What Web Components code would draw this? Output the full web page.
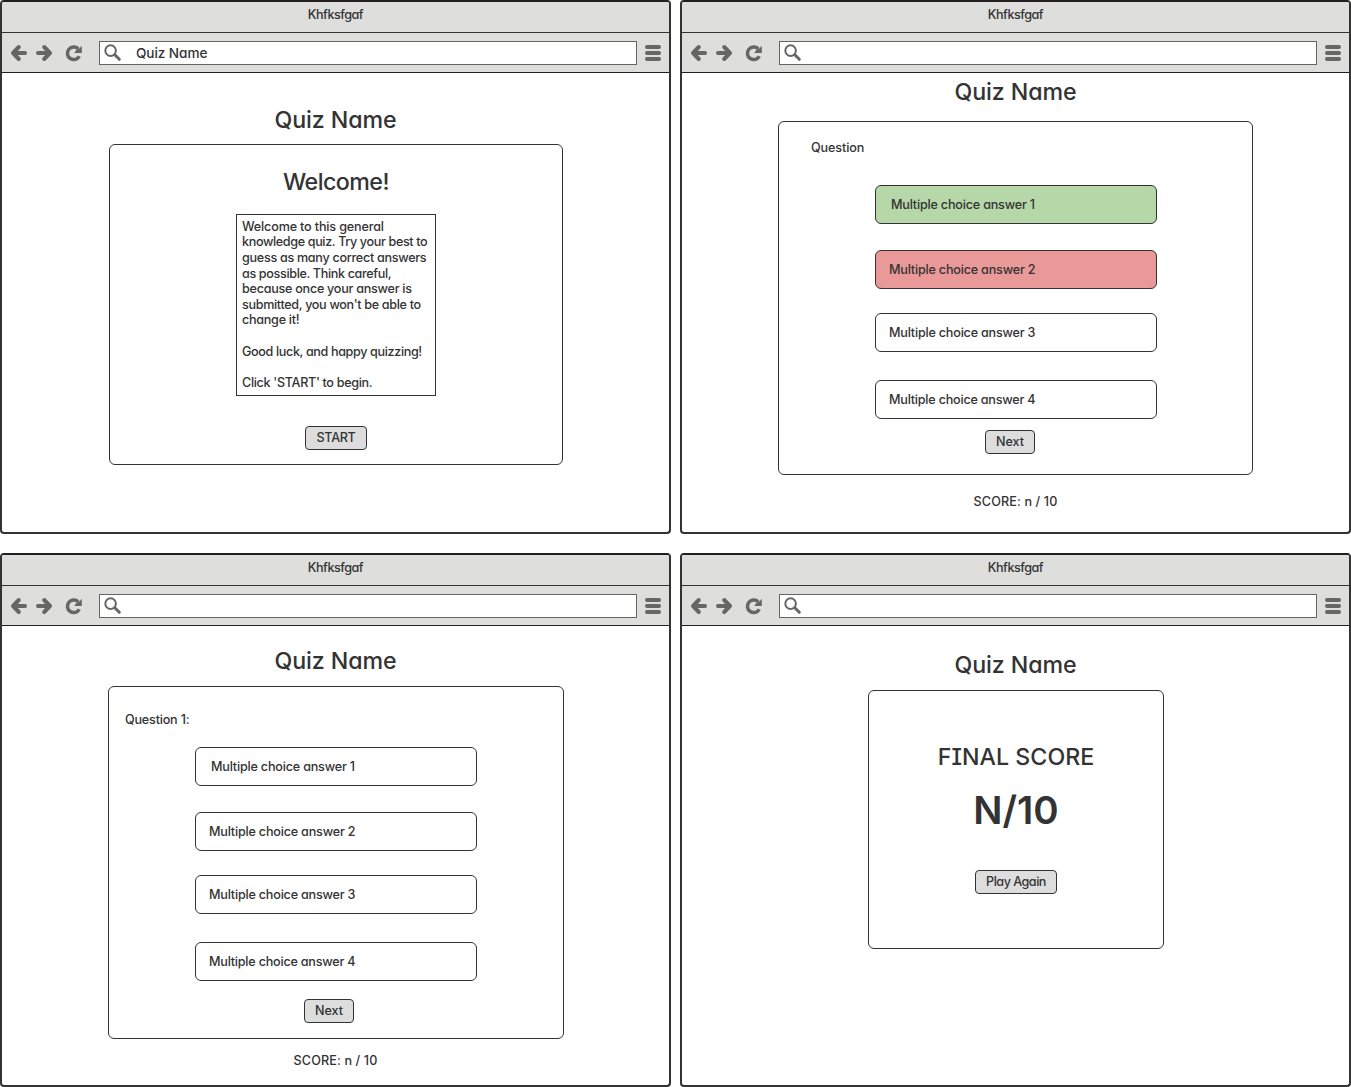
<!DOCTYPE html>
<html lang="en">
<head>
<meta charset="utf-8">
<title>Quiz wireframes</title>
<style>
html,body{margin:0;background:#fff}
body{font-family:Inter,"Liberation Sans",sans-serif;font-feature-settings:"cv11","cv08";color:#333;font-weight:550;font-size:12.6px;width:1351px;height:1087px;overflow:hidden}
</style>
</head>
<body>
<wire-board></wire-board>
<script>
const define = (name, css, html, after) => customElements.define(name, class extends HTMLElement {
  connectedCallback() {
    if (this.shadowRoot) return;
    const a = n => this.getAttribute(n);
    this.attachShadow({mode: 'open'}).innerHTML = `<style>*{box-sizing:border-box}${typeof css === 'function' ? css(a) : css}</style>${typeof html === 'function' ? html(a) : html}`;
    if (after) after(this, a);
  }
});

/* One line of text, tracked so that it spans the width given in "w". */
define('wire-text',
  a => `:host{display:block;flex:none;height:${a('h') || 20}px;line-height:${a('h') || 20}px;margin-top:${a('top') || 0}px;margin-left:${a('left') || 0}px;white-space:nowrap;font-size:${a('size') || 12.6}px;font-weight:${a('weight') || 550}} span{display:inline-block}`,
  '<span><slot></slot></span>',
  (el, a) => {
    const span = el.shadowRoot.querySelector('span'), n = el.textContent.length;
    const gap = (parseFloat(a('w')) + (a('size') > 20 ? 1 : .3) - span.getBoundingClientRect().width) / n;
    span.style.letterSpacing = gap.toFixed(3) + 'px';
  });

define('wire-icon', ':host{display:block;flex:none}svg{display:block}', a => ({
  back: '<svg width="18" height="18" viewBox="0 0 18 18" fill="none" stroke="#666" stroke-width="4" stroke-linecap="round" stroke-linejoin="round"><path d="M15 9H4"/><path d="M8.8 3L3 9L8.8 15" stroke-width="4"/></svg>',
  forward: '<svg width="18" height="18" viewBox="0 0 18 18" fill="none" stroke="#666" stroke-width="4" stroke-linecap="round" stroke-linejoin="round"><path d="M3 9H14"/><path d="M9.2 3L15 9L9.2 15" stroke-width="4"/></svg>',
  reload: '<svg width="18" height="18" viewBox="0 0 18 18"><path d="M14.3 12.2A6.3 6.3 0 1 1 13.2 4.8" fill="none" stroke="#666" stroke-width="3.5"/><path d="M16.8 1.8V9H9.2L11.8 5.6L14.6 4.2Z" fill="#666"/></svg>',
  search: '<svg width="18" height="18" viewBox="0 0 18 18" fill="none" stroke="#666"><circle cx="6.6" cy="6.6" r="5.3" stroke-width="2"/><path d="M10.8 10.8L15.3 15.3" stroke-width="3" stroke-linecap="round"/></svg>',
  menu: '<svg width="16" height="16" viewBox="0 0 16 16" fill="#666"><rect width="16" height="4" rx="2"/><rect y="6" width="16" height="4" rx="2"/><rect y="12" width="16" height="4" rx="2"/></svg>'
})[a('name')]);

define('wire-browser', `
:host{display:flex;flex-direction:column;width:671px;height:534px;border:2px solid #333;border-top-color:#231f20;border-radius:4px;overflow:hidden;box-sizing:border-box;background:#fff}
.title{height:31px;background:#dededc;border-bottom:1px solid #333;display:flex;justify-content:center;padding-top:3px}
.bar{height:40px;flex:none;background:#dededc;border-bottom:1px solid #231f20;display:flex;align-items:center;padding:0 8px}
.url{width:538px;height:24px;border:1px solid #666;background:#fff;display:flex;align-items:center;padding-left:4px;margin-left:16px;margin-right:8px}
.url div{margin-left:14px}
.gap1{margin-left:7px}.gap2{margin-left:12px}
.page{flex:1;display:flex;flex-direction:column;align-items:center}`, `
<div class="title"><wire-text w="55">Khfksfgaf</wire-text></div>
<div class="bar"><wire-icon name="back"></wire-icon><wire-icon class="gap1" name="forward"></wire-icon><wire-icon class="gap2" name="reload"></wire-icon>
<div class="url"><wire-icon name="search"></wire-icon><div><slot name="address"></slot></div></div><wire-icon name="menu"></wire-icon></div>
<div class="page"><slot></slot></div>`);

define('wire-card', a => `:host{display:flex;flex:none;flex-direction:column;align-items:center;box-sizing:border-box;width:${a('w')}px;height:${a('h')}px;margin-top:${a('top')}px;margin-left:${a('left') || 0}px;border:1px solid #333;border-radius:${a('r') || 6}px}::slotted([start]){align-self:flex-start}`, '<slot></slot>');

define('wire-answer', a => `:host{display:flex;flex:none;align-items:center;box-sizing:border-box;width:282px;height:39px;margin-top:${a('top')}px;margin-left:${a('left') || 0}px;padding-left:${a('pad') || 13}px;border:1px solid #333;border-radius:6px;background:${a('fill') || '#fff'}}`, '<slot></slot>');

define('wire-button', a => `:host{display:flex;flex:none;align-items:center;justify-content:center;box-sizing:border-box;width:${a('w')}px;height:24px;margin-top:${a('top')}px;margin-left:${a('left') || 0}px;border:1px solid #333;border-radius:4px;background:#ddd}`, '<slot></slot>');

const answers = (first, left = 0, green = '#fff', red = '#fff') => `
<wire-answer left="${left}" top="${first}" pad="15" fill="${green}"><wire-text w="143.5">Multiple choice answer 1</wire-text></wire-answer>
<wire-answer left="${left}" top="26" fill="${red}"><wire-text w="146">Multiple choice answer 2</wire-text></wire-answer>
<wire-answer left="${left}" top="24"><wire-text w="146">Multiple choice answer 3</wire-text></wire-answer>
<wire-answer left="${left}" top="28"><wire-text w="146">Multiple choice answer 4</wire-text></wire-answer>`;
const title = top => `<wire-text w="121" h="30" size="23.2" top="${top}">Quiz Name</wire-text>`;
const line = (w, t, top = 0) => `<wire-text start w="${w}" h="15.6" left="5" top="${top}">${t}</wire-text>`;

define('wire-board', ':host{display:grid;grid-template-columns:671px 671px;gap:19px 9px}', `
<wire-browser><wire-text slot="address" w="71" size="13.6">Quiz Name</wire-text>
${title(32)}
<wire-card w="454" h="321" top="9" left="1">
<wire-text w="105" h="30" size="23.2" top="21.5">Welcome!</wire-text>
<wire-card w="200" h="182" top="17.5" r="0">
${line(141.5, 'Welcome to this general', 3.8)}${line(185, 'knowledge quiz. Try your best to')}${line(184, 'guess as many correct answers')}${line(149, 'as possible. Think careful,')}${line(169.5, 'because once your answer is')}${line(178.5, "submitted, you won't be able to")}${line(57, 'change it!')}${line(179.5, 'Good luck, and happy quizzing!', 15.6)}${line(130, "Click 'START' to begin.", 15.6)}
</wire-card>
<wire-button w="62" top="30"><wire-text w="38.5">START</wire-text></wire-button>
</wire-card></wire-browser>

<wire-browser>
${title(4)}
<wire-card w="475" h="354" top="14">
<wire-text start w="53" top="16" left="32">Question</wire-text>
${answers(27, 1, '#b6d7a8', '#ea9999')}
<wire-button w="50" top="11" left="-11"><wire-text w="27.5">Next</wire-text></wire-button>
</wire-card>
<wire-text w="83.5" top="17">SCORE: n / 10</wire-text>
</wire-browser>

<wire-browser>
${title(20)}
<wire-card w="456" h="353" top="10" left="1">
<wire-text start w="64" top="23" left="16">Question 1:</wire-text>
${answers(17)}
<wire-button w="50" top="18" left="-14"><wire-text w="27.5">Next</wire-text></wire-button>
</wire-card>
<wire-text w="83.5" top="12">SCORE: n / 10</wire-text>
</wire-browser>

<wire-browser>
${title(24)}
<wire-card w="296" h="259" top="10" left="1">
<wire-text w="155.5" h="30" size="23.2" top="50.5">FINAL SCORE</wire-text>
<wire-text w="84.5" h="50" size="38.5" weight="600" top="13">N/10</wire-text>
<wire-button w="82" top="35.5"><wire-text w="59.5">Play Again</wire-text></wire-button>
</wire-card></wire-browser>`);
</script>
</body>
</html>
